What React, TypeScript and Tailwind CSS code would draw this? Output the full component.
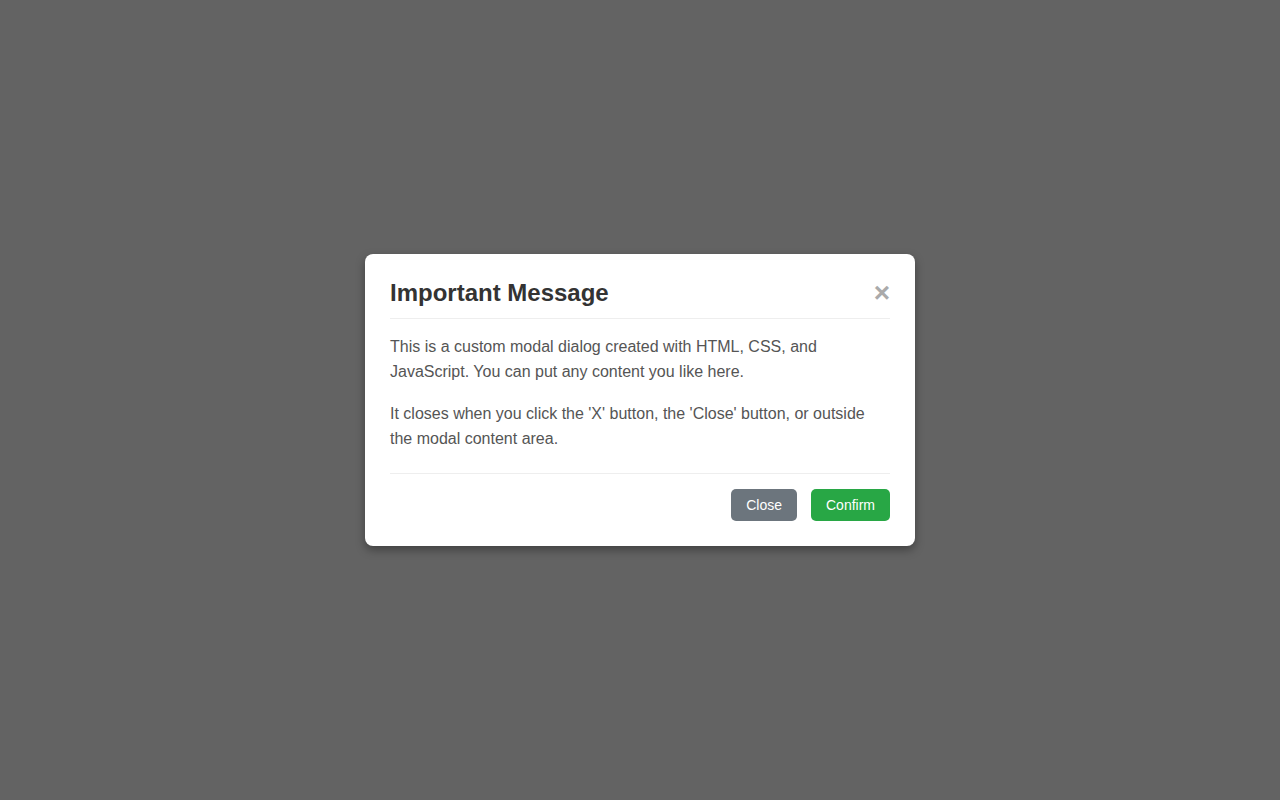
import React from "react";

export default function App() {
  return (
    <div
      className="w-full h-[800px] bg-[#636363] flex items-center justify-center"
      style={{ fontFamily: '"Liberation Sans", Arial, Helvetica, sans-serif' }}
    >
      <div className="w-[550px] bg-white rounded-[8px] p-[25px] shadow-[0_4px_10px_rgba(0,0,0,0.35)]">
        <div className="flex items-center justify-between border-b border-[#eeeeee] pb-[10px]">
          <h2 className="m-0 text-[24px] leading-[28.8px] font-bold text-[#333333]">Important Message</h2>
          <span className="text-[28px] leading-[28px] font-bold text-[#aaaaaa] cursor-pointer">×</span>
        </div>
        <div className="pt-[15px] pb-[21px] flex flex-col gap-[16px] text-[16px] leading-[25.6px] text-[#555555]">
          <p className="m-0">
            This is a custom modal dialog created with HTML, CSS, and JavaScript. You can put any content you like here.
          </p>
          <p className="m-0">
            It closes when you click the 'X' button, the 'Close' button, or outside the modal content area.
          </p>
        </div>
        <div className="border-t border-[#eeeeee] pt-[15px] flex justify-end gap-[14px]">
          <button className="bg-[#6c757d] text-white text-[14px] leading-[16px] px-[15px] py-[8px] rounded-[5px]">Close</button>
          <button className="bg-[#28a745] text-white text-[14px] leading-[16px] px-[15px] py-[8px] rounded-[5px]">Confirm</button>
        </div>
      </div>
    </div>
  );
}
